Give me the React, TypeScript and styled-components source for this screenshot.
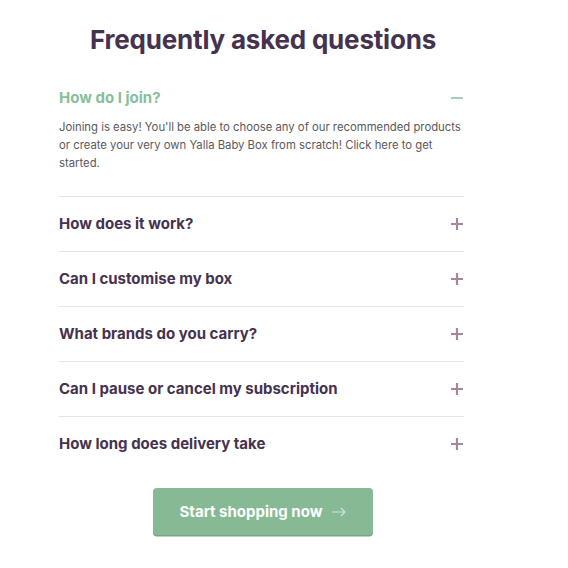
import React, { useState } from 'react';
import styled, { createGlobalStyle } from 'styled-components';

const GlobalStyle = createGlobalStyle`
  body {
    margin: 0;
    background: #ffffff;
    font-family: Inter, "Liberation Sans", sans-serif;
  }
`;

const Page = styled.main`
  width: 405px;
  padding: 20px 0 0 59px;
`;

const Title = styled.h1`
  margin: 0 0 11px;
  padding-left: 3px;
  font-size: 26px;
  line-height: 40px;
  font-weight: 700;
  text-align: center;
  color: #45324f;
  letter-spacing: -0.2px;
`;

const Item = styled.div<{ $last?: boolean }>`
  border-bottom: ${(p) => (p.$last ? 'none' : '1px solid #e6e4e6')};
`;

const Question = styled.button<{ $open: boolean }>`
  display: flex;
  align-items: center;
  justify-content: space-between;
  width: 100%;
  padding: ${(p) => (p.$open ? '17px 0 10px' : '17px 0')};
  border: none;
  background: none;
  cursor: pointer;
  font-family: inherit;
  font-size: 15px;
  line-height: 20px;
  font-weight: 700;
  text-align: left;
  color: ${(p) => (p.$open ? '#86c09a' : '#45324f')};
`;

const Answer = styled.p`
  margin: 0;
  padding: 0 0 24px;
  font-size: 11.3px;
  line-height: 18px;
  color: #5a585d;
`;

const Footer = styled.div`
  display: flex;
  justify-content: center;
  padding: 17px 0 4px;
`;

const ShopButton = styled.button`
  display: flex;
  align-items: center;
  justify-content: center;
  gap: 10px;
  width: 220px;
  height: 47px;
  margin-left: 3px;
  border: none;
  border-radius: 4px;
  background: #86ba95;
  box-shadow: 0 1.5px 0 #73a683;
  color: #ffffff;
  font-family: inherit;
  font-size: 15px;
  font-weight: 700;
  cursor: pointer;
`;

const ToggleIcon: React.FC<{ open: boolean }> = ({ open }) => (
  <svg width="14" height="14" viewBox="0 0 14 14" fill="none">
    {open ? (
      <path d="M1 7H13" stroke="#86c09a" strokeWidth="1.5" />
    ) : (
      <path d="M7 1V13M1 7H13" stroke="#a4879a" strokeWidth="2.2" />
    )}
  </svg>
);

const faqs = [
  {
    q: 'How do I join?',
    a: "Joining is easy! You'll be able to choose any of our recommended products or create your very own Yalla Baby Box from scratch! Click here to get started.",
  },
  { q: 'How does it work?', a: '' },
  { q: 'Can I customise my box', a: '' },
  { q: 'What brands do you carry?', a: '' },
  { q: 'Can I pause or cancel my subscription', a: '' },
  { q: 'How long does delivery take', a: '' },
];

const App: React.FC = () => {
  const [open, setOpen] = useState(0);

  return (
    <>
      <GlobalStyle />
      <Page>
        <Title>Frequently asked questions</Title>
        {faqs.map((f, i) => (
          <Item key={f.q} $last={i === faqs.length - 1}>
            <Question $open={open === i} onClick={() => setOpen(open === i ? -1 : i)}>
              {f.q}
              <ToggleIcon open={open === i} />
            </Question>
            {open === i && <Answer>{f.a}</Answer>}
          </Item>
        ))}
        <Footer>
          <ShopButton>
            Start shopping now
            <svg width="14" height="10" viewBox="0 0 14 10" fill="none">
              <path d="M0 5H13M9 1L13 5L9 9" stroke="rgba(255,255,255,0.6)" strokeWidth="1.2" />
            </svg>
          </ShopButton>
        </Footer>
      </Page>
    </>
  );
};

export default App;
